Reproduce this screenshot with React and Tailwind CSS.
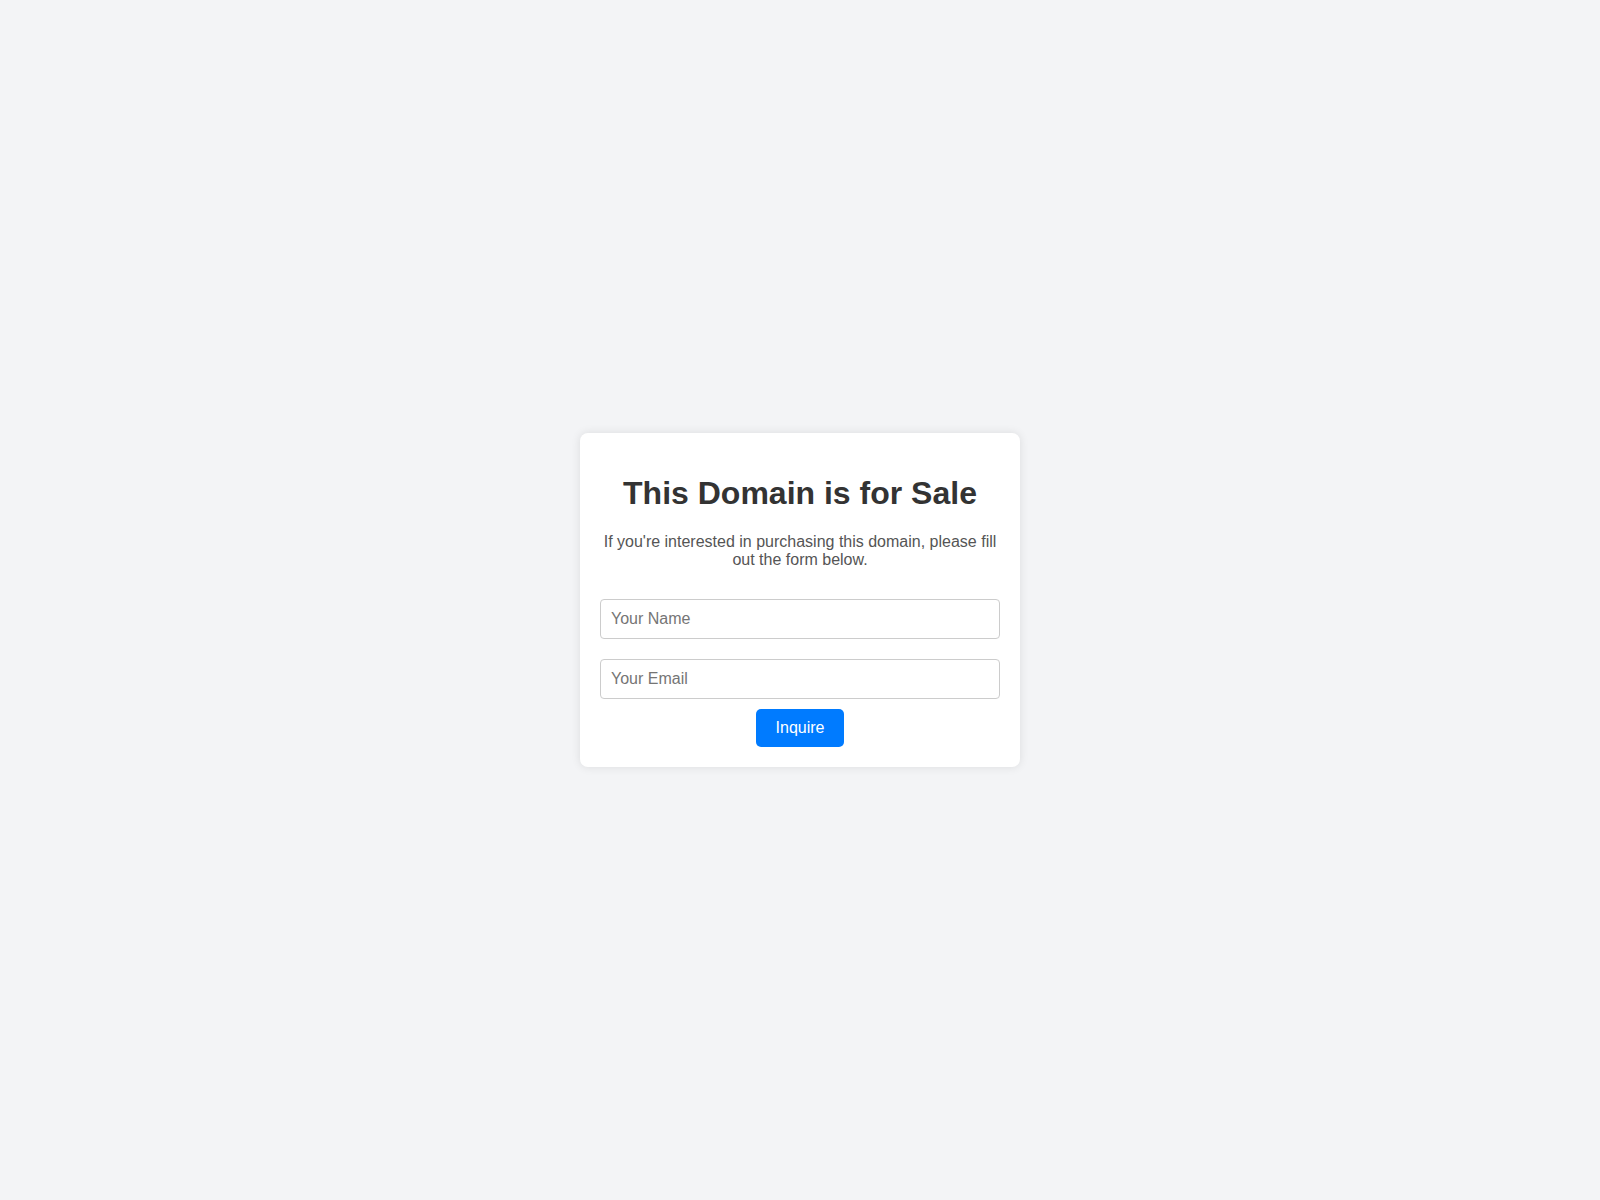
export default function App() {
  return (
    <div className="min-h-screen bg-[#f3f4f6] flex items-center justify-center font-['Liberation_Sans',Arial,sans-serif]">
      <div className="w-[440px] bg-white rounded-lg shadow-[0_0_10px_rgba(0,0,0,0.1)] p-5 text-center">
        <h1 className="text-[32px] leading-[1.15] font-bold text-[#333] mt-[21.44px] mb-[21.44px]">
          This Domain is for Sale
        </h1>
        <p className="text-base leading-[1.15] text-[#555] mb-[19px]">
          If you're interested in purchasing this domain, please fill out the form below.
        </p>
        <form className="flex flex-col items-center" onSubmit={e => e.preventDefault()}>
          <input
            type="text"
            placeholder="Your Name"
            className="w-full h-10 my-[10px] px-[10px] text-base text-[#333] border border-[#ccc] rounded placeholder:text-[#757575] outline-none"
          />
          <input
            type="email"
            placeholder="Your Email"
            className="w-full h-10 my-[10px] px-[10px] text-base text-[#333] border border-[#ccc] rounded placeholder:text-[#757575] outline-none"
          />
          <button
            type="submit"
            className="h-[38px] px-5 text-base text-white bg-[#007bff] rounded-[5px] cursor-pointer"
          >
            Inquire
          </button>
        </form>
      </div>
    </div>
  )
}
